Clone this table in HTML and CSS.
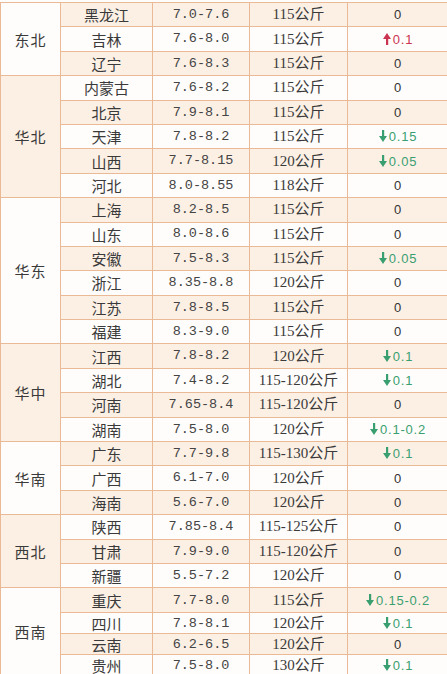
FILE: index.html
```html
<!DOCTYPE html>
<html lang="zh">
<head>
<meta charset="utf-8">
<link rel="stylesheet" href="styles.css">
</head>
<body>
<svg width="0" height="0" class="defs">
  <defs>
    <symbol id="dn" viewBox="0 0 8 12"><rect x="3" y="0" width="2.2" height="7" /><polygon points="0,6 8,6 4,12" /></symbol>
    <symbol id="up" viewBox="0 0 8 12"><rect x="3" y="5" width="2.2" height="7" /><polygon points="0,6 8,6 4,0" /></symbol>
  </defs>
</svg>
<table class="price">
  <colgroup><col class="c1"><col class="c2"><col class="c3"><col class="c4"><col class="c5"></colgroup>
  <tbody>
    <tr class="a"><td class="reg w" rowspan="3">东北</td><td>黑龙江</td><td class="rng">7.0-7.6</td><td class="wt">115公斤</td><td class="chg">0</td></tr>
    <tr class="b"><td>吉林</td><td class="rng">7.6-8.0</td><td class="wt">115公斤</td><td class="chg red"><svg class="ar"><use href="#up"/></svg>0.1</td></tr>
    <tr class="a"><td>辽宁</td><td class="rng">7.6-8.3</td><td class="wt">115公斤</td><td class="chg">0</td></tr>

    <tr class="b"><td class="reg p" rowspan="5">华北</td><td>内蒙古</td><td class="rng">7.6-8.2</td><td class="wt">115公斤</td><td class="chg">0</td></tr>
    <tr class="a"><td>北京</td><td class="rng">7.9-8.1</td><td class="wt">115公斤</td><td class="chg">0</td></tr>
    <tr class="b"><td>天津</td><td class="rng">7.8-8.2</td><td class="wt">115公斤</td><td class="chg grn"><svg class="ar"><use href="#dn"/></svg>0.15</td></tr>
    <tr class="a"><td>山西</td><td class="rng">7.7-8.15</td><td class="wt">120公斤</td><td class="chg grn"><svg class="ar"><use href="#dn"/></svg>0.05</td></tr>
    <tr class="b"><td>河北</td><td class="rng">8.0-8.55</td><td class="wt">118公斤</td><td class="chg">0</td></tr>

    <tr class="a"><td class="reg w" rowspan="6">华东</td><td>上海</td><td class="rng">8.2-8.5</td><td class="wt">115公斤</td><td class="chg">0</td></tr>
    <tr class="b"><td>山东</td><td class="rng">8.0-8.6</td><td class="wt">115公斤</td><td class="chg">0</td></tr>
    <tr class="a"><td>安徽</td><td class="rng">7.5-8.3</td><td class="wt">115公斤</td><td class="chg grn"><svg class="ar"><use href="#dn"/></svg>0.05</td></tr>
    <tr class="b"><td>浙江</td><td class="rng">8.35-8.8</td><td class="wt">120公斤</td><td class="chg">0</td></tr>
    <tr class="a"><td>江苏</td><td class="rng">7.8-8.5</td><td class="wt">115公斤</td><td class="chg">0</td></tr>
    <tr class="b"><td>福建</td><td class="rng">8.3-9.0</td><td class="wt">115公斤</td><td class="chg">0</td></tr>

    <tr class="a"><td class="reg p" rowspan="4">华中</td><td>江西</td><td class="rng">7.8-8.2</td><td class="wt">120公斤</td><td class="chg grn"><svg class="ar"><use href="#dn"/></svg>0.1</td></tr>
    <tr class="b"><td>湖北</td><td class="rng">7.4-8.2</td><td class="wt">115-120公斤</td><td class="chg grn"><svg class="ar"><use href="#dn"/></svg>0.1</td></tr>
    <tr class="a"><td>河南</td><td class="rng">7.65-8.4</td><td class="wt">115-120公斤</td><td class="chg">0</td></tr>
    <tr class="b"><td>湖南</td><td class="rng">7.5-8.0</td><td class="wt">120公斤</td><td class="chg grn"><svg class="ar"><use href="#dn"/></svg>0.1-0.2</td></tr>

    <tr class="a"><td class="reg w" rowspan="3">华南</td><td>广东</td><td class="rng">7.7-9.8</td><td class="wt">115-130公斤</td><td class="chg grn"><svg class="ar"><use href="#dn"/></svg>0.1</td></tr>
    <tr class="b"><td>广西</td><td class="rng">6.1-7.0</td><td class="wt">120公斤</td><td class="chg">0</td></tr>
    <tr class="a"><td>海南</td><td class="rng">5.6-7.0</td><td class="wt">120公斤</td><td class="chg">0</td></tr>

    <tr class="b"><td class="reg p" rowspan="3">西北</td><td>陕西</td><td class="rng">7.85-8.4</td><td class="wt">115-125公斤</td><td class="chg">0</td></tr>
    <tr class="a"><td>甘肃</td><td class="rng">7.9-9.0</td><td class="wt">115-120公斤</td><td class="chg">0</td></tr>
    <tr class="b"><td>新疆</td><td class="rng">5.5-7.2</td><td class="wt">120公斤</td><td class="chg">0</td></tr>

    <tr class="a t"><td class="reg w" rowspan="4">西南</td><td>重庆</td><td class="rng">7.7-8.0</td><td class="wt">115公斤</td><td class="chg grn"><svg class="ar"><use href="#dn"/></svg>0.15-0.2</td></tr>
    <tr class="b s"><td>四川</td><td class="rng">7.8-8.1</td><td class="wt">120公斤</td><td class="chg grn"><svg class="ar"><use href="#dn"/></svg>0.1</td></tr>
    <tr class="a s"><td>云南</td><td class="rng">6.2-6.5</td><td class="wt">120公斤</td><td class="chg">0</td></tr>
    <tr class="b s"><td>贵州</td><td class="rng">7.5-8.0</td><td class="wt">130公斤</td><td class="chg grn"><svg class="ar"><use href="#dn"/></svg>0.1</td></tr>
  </tbody>
</table>
</body>
</html>
```

FILE: styles.css
```css
html, body {
  margin: 0;
  padding: 0;
  background: #fffdfb;
  overflow: hidden;
}
.defs { position: absolute; }
.price {
  border-collapse: collapse;
  table-layout: fixed;
  width: 448px;
  margin-top: 2px;
  font-family: "Noto Sans CJK SC", "Noto Sans", sans-serif;
  font-size: 15px;
  color: #3a3a3a;
}
.c1 { width: 60px; }
.c2 { width: 92px; }
.c3 { width: 97px; }
.c4 { width: 98px; }
.c5 { width: 101px; }
.price td {
  border: 1px solid #eab995;
  text-align: center;
  vertical-align: middle;
  padding: 0;
  line-height: 1;
  white-space: nowrap;
}
.price tr { height: 24.4px; }
.price tr.t { height: 25px; }
.price tr.s { height: 21px; }
.price tr.a td { background: #fcf0e5; }
.price tr.b td { background: #fffdfb; }
.price tr td.reg.w { background: #fffdfb; }
.price tr td.reg.p { background: #fcefe3; }
.reg { letter-spacing: 1px; }
.rng {
  font-family: "Liberation Mono", monospace;
  font-size: 13.5px;
  color: #444;
}
.wt {
  font-family: "Liberation Serif", "Noto Sans CJK SC", serif;
  font-size: 15px;
}
.chg {
  font-family: "Liberation Sans", sans-serif;
  font-size: 13px;
  letter-spacing: 0.8px;
  color: #333;
}
.chg.grn { color: #3a9f70; }
.chg.red { color: #cc3350; }
.ar {
  width: 8px;
  height: 12px;
  fill: currentColor;
  vertical-align: -1px;
  margin-right: 2px;
}
```
